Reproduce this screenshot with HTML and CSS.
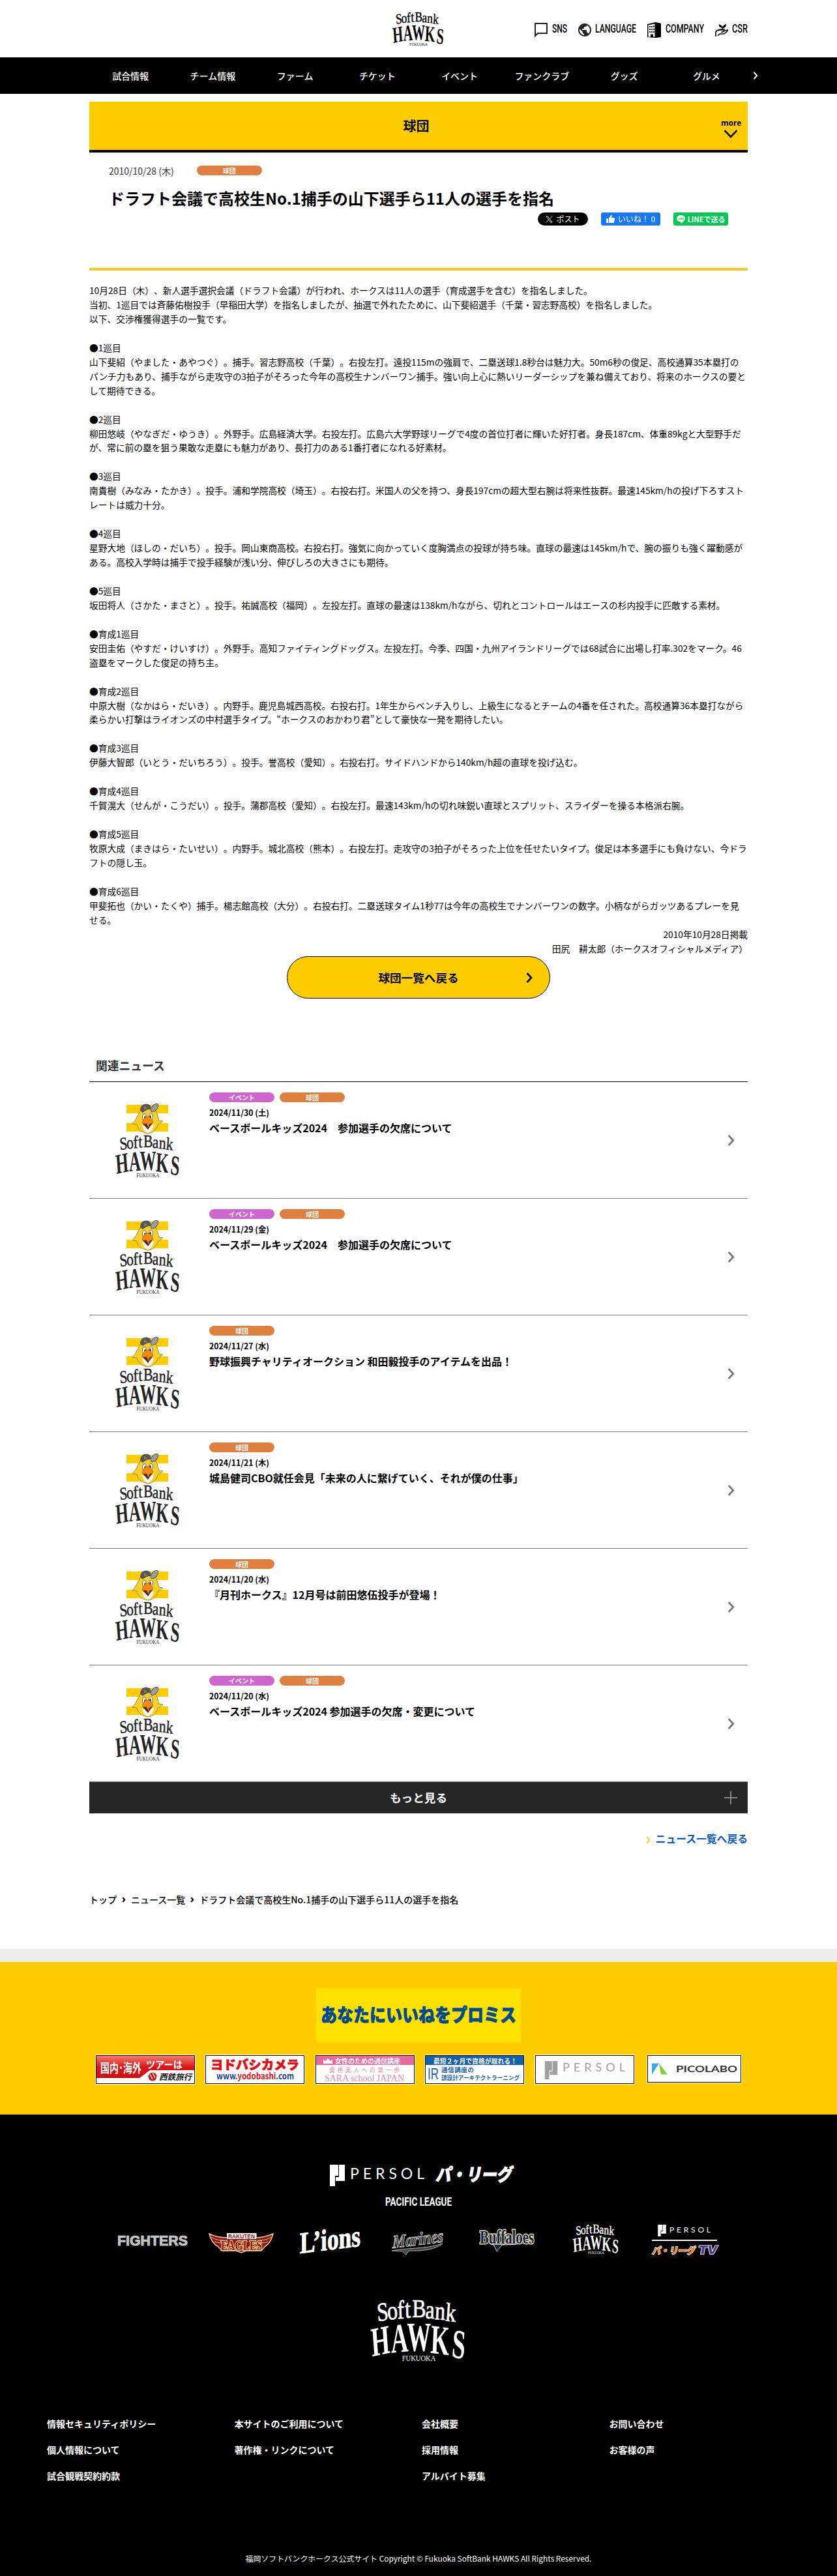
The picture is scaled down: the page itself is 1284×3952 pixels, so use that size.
FILE: index.html
```html
<!DOCTYPE html>
<html lang="ja">
<head>
<meta charset="utf-8">
<title>ドラフト会議で高校生No.1捕手の山下選手ら11人の選手を指名</title>
<link rel="stylesheet" href="styles.css">
</head>
<body>
<svg class="defs" width="0" height="0" aria-hidden="true">
  <symbol id="hawks" viewBox="0 0 102 65">
    <g fill="currentColor" font-family="Liberation Serif, serif" text-anchor="middle">
      <text transform="scale(.8 1)" font-size="27" stroke="currentColor" stroke-width=".5" x="17.5 30 40.5 49.5 64 78 91 104.5" y="23 21.5 20.5 19.5 19 20 21 22.5" rotate="-5 -4 -2 -1 0 2 3 5">SoftBank</text>
      <text transform="scale(.58 1)" font-size="43" font-weight="bold" x="21 54 88 125 158" y="60 56 54 56 60" rotate="-7 -3 0 4 7">HAWKS</text>
      <text x="51" y="64.5" font-size="8" textLength="35" lengthAdjust="spacingAndGlyphs">FUKUOKA</text>
    </g>
  </symbol>
  <symbol id="thumb" viewBox="0 0 102 113">
    <path fill="#fc0" d="M18 2h64v13H18zM18 30h64v13H18z"/>
    <path fill="#f9cf2a" stroke="#8a7430" stroke-width=".8" d="M42 8C35 16 35 23 27 31l7 1c1 7 8 13 17 14 8-1 13-6 15-13l8-6-6-1c-3-8-2-13-9-19z"/>
    <path fill="#fff" d="M42 33c2 8 5 11 9 12 4-1 8-6 9-13l-9 4z"/>
    <ellipse cx="45.500" cy="21" rx="3" ry="5.500" fill="#fff" stroke="#333" stroke-width=".7"/>
    <ellipse cx="55.500" cy="20" rx="3" ry="5" fill="#fff" stroke="#333" stroke-width=".7"/>
    <ellipse cx="46.500" cy="22" rx="1.300" ry="3" fill="#222"/>
    <ellipse cx="54.500" cy="21" rx="1.300" ry="3" fill="#222"/>
    <path fill="#5a2a18" d="M43 31l8 9 7-10z"/>
    <path fill="#f08a12" stroke="#7a4a10" stroke-width=".5" d="M50.500 20c4 0 7 4 8.500 9l-6 3-1 5-3-6-7-1c1-5 4-10 8.500-10z"/>
    <path fill="#55565a" d="M39 11C39 3 45-1 51 1c4 1 5 4 4 8-5 0-9 2-12 5z"/>
    <ellipse cx="61" cy="6.500" rx="7.500" ry="4" transform="rotate(-50 61 6.500)" fill="#9b9ca0" stroke="#55565a"/>
    <path d="M46 4v5M46 7q3-2 3 2" fill="none" stroke="#c8a020"/>
    <use href="#hawks" y="48" width="102" height="65"/>
  </symbol>
  <symbol id="persol-mark" viewBox="0 0 23 33">
    <path fill="currentColor" d="M0 0h13v17h-5v16H0zM14 0h9v25H9v-6h5z"/>
  </symbol>
  <symbol id="chev" viewBox="0 0 10 16"><path d="M1.500 1l6.500 7-6.500 7" fill="none" stroke="currentColor" stroke-width="2.600"/></symbol>
  <symbol id="chev-bold" viewBox="0 0 10 16"><path d="M2 2l5 6-5 6" fill="none" stroke="currentColor" stroke-width="4"/></symbol>
</svg>

<header class="head">
  <svg class="head-logo" role="img" aria-label="SoftBank HAWKS"><use href="#hawks"/></svg>
  <ul class="util">
    <li><svg width="20" height="22" viewBox="0 0 20 22"><path d="M1 1h18v15H5l-4 4z" fill="none" stroke="#222" stroke-width="2"/></svg><svg class="cond" width="23" height="20"><text x="0" y="16" textLength="23" lengthAdjust="spacingAndGlyphs">SNS</text></svg></li>
    <li><svg width="20" height="20" viewBox="2 2 20 20"><path fill="#222" d="M12 2C6.480 2 2 6.480 2 12s4.480 10 10 10 10-4.480 10-10S17.520 2 12 2zm-1 17.930c-3.950-.49-7-3.850-7-7.930 0-.62.080-1.210.210-1.790L9 15v1c0 1.100.9 2 2 2v1.930zm6.900-2.540c-.26-.81-1-1.390-1.900-1.390h-1v-3c0-.55-.45-1-1-1H8v-2h2c.55 0 1-.45 1-1V7h2c1.100 0 2-.9 2-2v-.41c2.930 1.190 5 4.060 5 7.410 0 2.080-.8 3.970-2.100 5.390z"/></svg><svg class="cond" width="63" height="20"><text x="0" y="16" textLength="63" lengthAdjust="spacingAndGlyphs">LANGUAGE</text></svg></li>
    <li><svg width="21" height="24" viewBox="0 0 21 24"><path d="M0 3l13-3 8 2v21l-8 1-13-1z"/><path fill="#fff" d="M1.500 4.500l10-2v20H9v-4H5v4H1.500z"/><path d="M3 6h2v2H3zM6 6h2v2H6zM9 5.500h2v2H9zM3 10h2v2H3zM6 10h2v2H6zM9 10h2v2H9zM3 14h2v2H3zM6 14h2v2H6zM9 14h2v2H9z"/></svg><svg class="cond" width="59" height="20"><text x="0" y="16" textLength="59" lengthAdjust="spacingAndGlyphs">COMPANY</text></svg></li>
    <li><svg width="20" height="21" viewBox="0 0 20 21"><path d="M11 7C11 4 9 2 6 1c-1 3 1 5 5 6zM11.500 7C12 3 14 2 17 1c0 4-2 6-5.500 6z"/><path d="M11.300 4v5M1 20v-7c2-3 5-4 8-3h4c1 2 0 3-4 3.500M13 12l6-2c1 1-3 5-6 6H7l-3 3M5 11l3-2h7" fill="none" stroke="#111" stroke-width="1.700"/></svg><svg class="cond" width="24" height="20"><text x="0" y="16" textLength="24" lengthAdjust="spacingAndGlyphs">CSR</text></svg></li>
  </ul>
</header>

<nav class="gnav">
  <ul class="wrap">
    <li>試合情報</li><li>チーム情報</li><li>ファーム</li><li>チケット</li><li>イベント</li><li>ファンクラブ</li><li>グッズ</li><li>グルメ</li>
    <svg class="gnav-next"><use href="#chev"/></svg>
  </ul>
</nav>

<main class="wrap">
  <div class="cat">
    <h1>球団</h1>
    <div class="cat-more">more<svg width="22" height="14" viewBox="0 0 22 14"><path d="M1.500 2l9.500 10 9.500-10" fill="none" stroke="#111" stroke-width="2.600"/></svg></div>
  </div>

  <div class="art-head">
    <div class="meta"><time>2010/10/28 (木)</time><span class="tag club">球団</span></div>
    <h2>ドラフト会議で高校生No.1捕手の山下選手ら11人の選手を指名</h2>
    <div class="share">
      <span class="sb x"><svg width="11" height="11" viewBox="0 0 24 24"><path fill="none" stroke="#fff" stroke-width="1.800" d="M2 2h5l15 20h-5zM22 1L13.500 10.500M10.500 13.500L2 23"/></svg>ポスト</span>
      <span class="sb fb"><svg width="13" height="12" viewBox="0 0 13 12"><path fill="#fff" d="M0 5h3v7H0zM4 5l3-5c2 0 2 1 1 4h4c1 0 1 1 1 2l-1 5c0 1-1 1-2 1H4z"/></svg>いいね！ 0</span>
      <span class="sb line"><svg width="13" height="13" viewBox="0 0 13 13"><path fill="#fff" d="M6.500 0C10 0 13 2.300 13 5.300c0 3-4 6-6.500 7.700V10.500C3 10.500 0 8.300 0 5.300S3 0 6.500 0z"/><text x="6.500" y="6.800" text-anchor="middle" font-size="4" font-weight="bold" fill="#06c755" font-family="Liberation Sans">LINE</text></svg>LINEで送る</span>
    </div>
  </div>

  <article class="body">
    <p>10月28日（木）、新人選手選択会議（ドラフト会議）が行われ、ホークスは11人の選手（育成選手を含む）を指名しました。<br>当初、1巡目では斉藤佑樹投手（早稲田大学）を指名しましたが、抽選で外れたために、山下斐紹選手（千葉・習志野高校）を指名しました。<br>以下、交渉権獲得選手の一覧です。</p>
    <p>●1巡目<br>山下斐紹（やました・あやつぐ）。捕手。習志野高校（千葉）。右投左打。遠投115mの強肩で、二塁送球1.8秒台は魅力大。50m6秒の俊足、高校通算35本塁打のパンチ力もあり、捕手ながら走攻守の3拍子がそろった今年の高校生ナンバーワン捕手。強い向上心に熱いリーダーシップを兼ね備えており、将来のホークスの要として期待できる。</p>
    <p>●2巡目<br>柳田悠岐（やなぎだ・ゆうき）。外野手。広島経済大学。右投左打。広島六大学野球リーグで4度の首位打者に輝いた好打者。身長187cm、体重89kgと大型野手だが、常に前の塁を狙う果敢な走塁にも魅力があり、長打力のある1番打者になれる好素材。</p>
    <p>●3巡目<br>南貴樹（みなみ・たかき）。投手。浦和学院高校（埼玉）。右投右打。米国人の父を持つ、身長197cmの超大型右腕は将来性抜群。最速145km/hの投げ下ろすストレートは威力十分。</p>
    <p>●4巡目<br>星野大地（ほしの・だいち）。投手。岡山東商高校。右投右打。強気に向かっていく度胸満点の投球が持ち味。直球の最速は145km/hで、腕の振りも強く躍動感がある。高校入学時は捕手で投手経験が浅い分、伸びしろの大きさにも期待。</p>
    <p>●5巡目<br>坂田将人（さかた・まさと）。投手。祐誠高校（福岡）。左投左打。直球の最速は138km/hながら、切れとコントロールはエースの杉内投手に匹敵する素材。</p>
    <p>●育成1巡目<br>安田圭佑（やすだ・けいすけ）。外野手。高知ファイティングドッグス。左投左打。今季、四国・九州アイランドリーグでは68試合に出場し打率.302をマーク。46盗塁をマークした俊足の持ち主。</p>
    <p>●育成2巡目<br>中原大樹（なかはら・だいき）。内野手。鹿児島城西高校。右投右打。1年生からベンチ入りし、上級生になるとチームの4番を任された。高校通算36本塁打ながら柔らかい打撃はライオンズの中村選手タイプ。“ホークスのおかわり君”として豪快な一発を期待したい。</p>
    <p>●育成3巡目<br>伊藤大智郎（いとう・だいちろう）。投手。誉高校（愛知）。右投右打。サイドハンドから140km/h超の直球を投げ込む。</p>
    <p>●育成4巡目<br>千賀滉大（せんが・こうだい）。投手。蒲郡高校（愛知）。右投左打。最速143km/hの切れ味鋭い直球とスプリット、スライダーを操る本格派右腕。</p>
    <p>●育成5巡目<br>牧原大成（まきはら・たいせい）。内野手。城北高校（熊本）。右投左打。走攻守の3拍子がそろった上位を任せたいタイプ。俊足は本多選手にも負けない、今ドラフトの隠し玉。</p>
    <p>●育成6巡目<br>甲斐拓也（かい・たくや）捕手。楊志館高校（大分）。右投右打。二塁送球タイム1秒77は今年の高校生でナンバーワンの数字。小柄ながらガッツあるプレーを見せる。</p>
    <p class="sign">2010年10月28日掲載<br>田尻　耕太郎（ホークスオフィシャルメディア）</p>
  </article>

  <a class="back">球団一覧へ戻る<svg><use href="#chev"/></svg></a>

  <section class="news">
    <h3>関連ニュース</h3>
    <div class="item"><svg class="thumb"><use href="#thumb"/></svg><div class="txt"><div class="tags"><span class="tag event">イベント</span><span class="tag club">球団</span></div><time>2024/11/30 (土)</time><p>ベースボールキッズ2024　参加選手の欠席について</p></div><svg class="go"><use href="#chev"/></svg></div>
    <div class="item"><svg class="thumb"><use href="#thumb"/></svg><div class="txt"><div class="tags"><span class="tag event">イベント</span><span class="tag club">球団</span></div><time>2024/11/29 (金)</time><p>ベースボールキッズ2024　参加選手の欠席について</p></div><svg class="go"><use href="#chev"/></svg></div>
    <div class="item"><svg class="thumb"><use href="#thumb"/></svg><div class="txt"><div class="tags"><span class="tag club">球団</span></div><time>2024/11/27 (水)</time><p>野球振興チャリティオークション 和田毅投手のアイテムを出品！</p></div><svg class="go"><use href="#chev"/></svg></div>
    <div class="item"><svg class="thumb"><use href="#thumb"/></svg><div class="txt"><div class="tags"><span class="tag club">球団</span></div><time>2024/11/21 (木)</time><p>城島健司CBO就任会見「未来の人に繋げていく、それが僕の仕事」</p></div><svg class="go"><use href="#chev"/></svg></div>
    <div class="item"><svg class="thumb"><use href="#thumb"/></svg><div class="txt"><div class="tags"><span class="tag club">球団</span></div><time>2024/11/20 (水)</time><p>『月刊ホークス』12月号は前田悠伍投手が登場！</p></div><svg class="go"><use href="#chev"/></svg></div>
    <div class="item"><svg class="thumb"><use href="#thumb"/></svg><div class="txt"><div class="tags"><span class="tag event">イベント</span><span class="tag club">球団</span></div><time>2024/11/20 (水)</time><p>ベースボールキッズ2024 参加選手の欠席・変更について</p></div><svg class="go"><use href="#chev"/></svg></div>
    <div class="load">もっと見る<svg width="20" height="20" viewBox="0 0 20 20"><path d="M0 10h20M10 0v20" stroke="#888" stroke-width="2"/></svg></div>
    <a class="list-link"><svg><use href="#chev"/></svg>ニュース一覧へ戻る</a>
  </section>

  <nav class="crumb"><span>トップ</span><svg><use href="#chev-bold"/></svg><span>ニュース一覧</span><svg><use href="#chev-bold"/></svg><span>ドラフト会議で高校生No.1捕手の山下選手ら11人の選手を指名</span></nav>
</main>

<section class="sponsors">
  <svg class="promise" viewBox="0 0 314 84"><text x="7" y="52" textLength="300" lengthAdjust="spacingAndGlyphs" font-size="28" font-weight="900" fill="#004b8f" stroke="#004b8f" stroke-width=".8">あなたにいいねをプロミス</text></svg>
  <div class="banners">
    <div class="bn"><svg viewBox="0 0 150 42">
      <defs><linearGradient id="rg" x2="0" y2="1"><stop offset="0" stop-color="#f87c70"/><stop offset=".5" stop-color="#d81818"/><stop offset="1" stop-color="#d01010"/></linearGradient></defs>
      <path fill="url(#rg)" d="M0 0h150v22H82L66 34H0z"/>
      <g fill="#fff" font-weight="bold"><text x="6" y="26" font-size="19" textLength="63" lengthAdjust="spacingAndGlyphs">国内･海外</text><text x="76" y="19" font-size="15" textLength="56" lengthAdjust="spacingAndGlyphs">ツアーは</text></g>
      <circle cx="86" cy="32" r="6.500" fill="#d01010"/><path d="M82 28l4 8M86 26l4 8" stroke="#fff" stroke-width="1.500"/>
      <text x="96" y="37" font-size="12.5" font-weight="bold" font-style="italic" fill="#111" textLength="50" lengthAdjust="spacingAndGlyphs">西鉄旅行</text></svg></div>
    <div class="bn"><svg viewBox="0 0 150 42"><text x="7" y="21" font-size="19" font-weight="900" fill="#e01018" stroke="#e01018" stroke-width=".7" textLength="136" lengthAdjust="spacingAndGlyphs">ヨドバシカメラ</text><text x="16" y="36" font-size="13" font-weight="bold" fill="#1c3f94" textLength="119" lengthAdjust="spacingAndGlyphs">www.<tspan fill="#e01018">yodobashi</tspan>.com</text></svg></div>
    <div class="bn"><svg viewBox="0 0 150 42"><path fill="#ea68a2" d="M0 0h150v14H0z"/><path fill="#fff" d="M11 5l3 3 4-4 4 4 3-3v7H11z"/><text x="29" y="11.500" font-size="10" font-weight="bold" fill="#fff" textLength="100" lengthAdjust="spacingAndGlyphs">女性のための通信講座</text><text x="20" y="24.500" font-size="9" fill="#e58ab0" textLength="108">資格美人への第一歩</text><text x="13" y="38.500" font-size="14" font-family="Liberation Serif" fill="#e58ab0" textLength="122" lengthAdjust="spacingAndGlyphs">SARA school JAPAN</text></svg></div>
    <div class="bn"><svg viewBox="0 0 150 42"><path fill="#1660ab" d="M0 0h150v14H0z"/><text x="12" y="11.500" font-size="9.800" font-weight="bold" fill="#fff" textLength="128" lengthAdjust="spacingAndGlyphs">最短２ヶ月で資格が取れる！</text><text x="3" y="36" font-size="24" fill="#1660ab" textLength="17" lengthAdjust="spacingAndGlyphs" font-family="Liberation Sans">IR</text><g fill="#1660ab" font-weight="bold"><text x="24" y="25" font-size="9.500" textLength="50">通信講座の</text><text x="24" y="37" font-size="8.600" textLength="120" lengthAdjust="spacingAndGlyphs">諒設計アーキテクトラーニング</text></g></svg></div>
    <div class="bn"><svg viewBox="0 0 150 42"><g color="#a0a0a0"><use href="#persol-mark" x="13" y="8" width="21" height="28"/></g><text x="41" y="24" font-size="18" font-family="Lato" fill="#a0a0a0" textLength="96">PERSOL</text></svg></div>
    <div class="bn small"><svg viewBox="0 0 142 39"><path fill="#3ba9e8" d="M6 28V11h11z"/><path fill="#7ad62e" d="M17 11l13 17H20z"/><text x="43" y="24" font-size="14" font-family="Lato" font-weight="bold" fill="#333" textLength="94" lengthAdjust="spacingAndGlyphs">PICOLABO</text></svg></div>
  </div>
</section>

<footer class="foot">
  <svg class="league" viewBox="0 0 284 36"><use href="#persol-mark" width="23" height="33"/><text x="31" y="21.500" font-size="23" font-family="Lato" fill="#fff" textLength="114" lengthAdjust="spacing">PERSOL</text><text transform="translate(162 25) skewX(-10)" font-size="27" font-weight="900" fill="#fff" stroke="#fff" textLength="117" lengthAdjust="spacingAndGlyphs">パ・リーグ</text></svg>
  <svg class="pl" width="102" height="20"><text x="0" y="17" textLength="102" lengthAdjust="spacingAndGlyphs">PACIFIC LEAGUE</text></svg>
  <div class="teams">
    <svg width="108" height="50" viewBox="0 0 108 50"><text x="0" y="33" font-size="22" font-family="Liberation Sans" font-weight="bold" fill="#bbb" stroke="#e8e8e8" stroke-width=".7" textLength="108" lengthAdjust="spacingAndGlyphs">FIGHTERS</text></svg>
    <svg width="98" height="50" viewBox="0 0 98 50"><path fill="#8c1515" stroke="#e8c890" stroke-width="1.500" d="M0 15c12 6 22 6 28 6V15h44v6c6 0 16-2 26-6-3 12-8 17-13 20l-5 6H57l-8 3-8-3H20l-6-6C8 32 3 27 0 15z"/><path fill="#fff" d="M27 14h45v9H27z"/><text x="29" y="22" font-size="9" font-family="Liberation Sans" font-weight="bold" fill="#8c1515" textLength="41" lengthAdjust="spacingAndGlyphs">RAKUTEN</text><path d="M3 20c6 4 12 5 18 5M8 27c5 2 9 2 13 2M95 20c-6 4-12 5-18 5M90 27c-5 2-9 2-13 2" stroke="#e8c890" fill="none"/><text x="18" y="40" font-size="20" font-family="Liberation Serif" font-weight="bold" fill="#8c1515" stroke="#f8d890" stroke-width="2.500" paint-order="stroke" textLength="63" lengthAdjust="spacingAndGlyphs">EAGLES</text></svg>
    <svg width="94" height="50" viewBox="0 0 94 50"><text transform="translate(0 45) skewY(-7)" font-size="46" font-family="Liberation Serif" font-weight="bold" fill="#fff" stroke="#fff" stroke-width="1" textLength="93" lengthAdjust="spacingAndGlyphs">L’ions</text></svg>
    <svg width="84" height="50" viewBox="0 0 84 50"><path d="M1 41c25-5 50-2 78-11-10 9-32 12-52 11l-4 6-5-5z" fill="#444" stroke="#aaa"/><text transform="translate(2 37) skewY(-7)" font-size="28" font-family="Liberation Serif" font-weight="bold" font-style="italic" fill="#333" stroke="#bbb" stroke-width="1.200" textLength="78" lengthAdjust="spacingAndGlyphs">Marines</text></svg>
    <svg width="84" height="50" viewBox="0 0 84 50"><path d="M18 31l58-5c-10 5-28 6-42 6l-8 10-4-9z" fill="#15204a" stroke="#d8d0a0"/><text x="0" y="30" font-size="29" font-family="Liberation Serif" font-weight="bold" fill="#15204a" stroke="#e8e0b0" stroke-width="3" paint-order="stroke" textLength="83" lengthAdjust="spacingAndGlyphs">Buffaloes</text></svg>
    <svg class="hawks-s" width="73" height="47"><use href="#hawks"/></svg>
    <svg width="100" height="50" viewBox="0 0 100 50"><use href="#persol-mark" x="9" y="1" width="13" height="18"/><text x="27" y="13" font-size="12" font-family="Lato" fill="#fff" textLength="63">PERSOL</text><path d="M0 25h100" stroke="#fff" stroke-width="2"/><g font-weight="900" transform="translate(0 46) skewX(-10)"><text font-size="14" fill="#f07818" stroke="#fff" stroke-width="1.500" paint-order="stroke" textLength="66" lengthAdjust="spacingAndGlyphs">パ・リーグ</text><text x="70" font-size="17" fill="#4a3a8c" stroke="#fff" stroke-width="1.500" paint-order="stroke" textLength="29" lengthAdjust="spacingAndGlyphs">TV</text></g></svg>
  </div>
  <svg class="foot-logo" role="img" aria-label="SoftBank HAWKS"><use href="#hawks"/></svg>
  <div class="links">
    <ul><li>情報セキュリティポリシー</li><li>個人情報について</li><li>試合観戦契約約款</li></ul>
    <ul><li>本サイトのご利用について</li><li>著作権・リンクについて</li></ul>
    <ul><li>会社概要</li><li>採用情報</li><li>アルバイト募集</li></ul>
    <ul><li>お問い合わせ</li><li>お客様の声</li></ul>
  </div>
  <small>福岡ソフトバンクホークス公式サイト Copyright © Fukuoka SoftBank HAWKS All Rights Reserved.</small>
</footer>
</body>
</html>
```
FILE: styles.css
```css
* { box-sizing: border-box; }
body { margin: 0; background: #fff; color: #000; font-family: "Noto Sans CJK JP", sans-serif; font-size: 14px; line-height: 20px; text-spacing-trim: space-all; }
h1, h2, h3, p, ul { margin: 0; padding: 0; }
ul { list-style: none; }
svg { display: block; flex: none; overflow: visible; }
.defs { position: absolute; }
.wrap { width: 1010px; margin: 0 auto; }

.head { width: 1010px; height: 88px; margin: 0 auto; padding-top: 18px; display: grid; grid-template-columns: 1fr 82px 1fr; align-items: start; }
.head-logo { grid-column: 2; width: 82px; height: 52px; }
.util { display: flex; justify-content: flex-end; gap: 17px; margin-top: 16px; }
.util li { display: flex; align-items: center; gap: 6.5px; height: 24px; }
.util .cond { margin-top: -4px; }
.cond text { font: 500 19px "Roboto", sans-serif; }

.gnav { background: #000; color: #fff; height: 56px; }
.gnav ul { position: relative; display: flex; height: 56px; align-items: center; }
.gnav li { flex: 1; text-align: center; font-weight: 500; }
.gnav-next { position: absolute; left: 1018px; top: 22px; width: 8px; height: 12px; }

.cat { height: 78px; margin-top: 12px; background: #fc0; border-bottom: 4px solid #000; display: grid; grid-template-columns: 1fr 47px; align-items: center; }
.cat h1 { font-size: 20px; line-height: 30px; text-align: center; padding-left: 40px; }
.cat-more { padding-top: 7px; font-size: 12px; font-weight: 700; line-height: 14px; display: grid; gap: 3px; padding-left: 6px; width: 40px; }
.cat-more svg { margin-left: 4px; }

.art-head { height: 181px; border-bottom: 4px solid #f5ca1c; padding: 17px 30px 0; }
.meta { display: flex; align-items: center; gap: 35px; height: 21px; color: #333; }
.tag { width: 100px; height: 15px; border-radius: 8px; color: #fff; font-size: 10px; line-height: 15px; font-weight: 700; text-align: center; }
.club { background: #df8040; }
.event { background: #cf66cf; }
.art-head h2 { font-size: 24px; line-height: 36px; margin-top: 14px; }
.share { display: flex; justify-content: flex-end; margin-top: 4px; gap: 20px; }
.sb { height: 20px; display: flex; align-items: center; justify-content: center; gap: 5px; color: #fff; font-size: 12px; border-radius: 3px; white-space: nowrap; }
.sb.x { width: 77px; background: #000; border-radius: 10px; }
.sb.fb { width: 91px; background: #1877f2; }
.sb.line { width: 84px; background: #06c755; font-size: 11px; font-weight: 700; gap: 4px; }

.body { padding-top: 20px; font-size: 13.72px; line-height: 21.95px; }
.body p { margin-bottom: 21.95px; }
.body .sign { margin: -21.95px 0 0; text-align: right; }

.back { position: relative; display: block; width: 404px; height: 65px; margin: 0 auto; border: 1px solid #000; border-radius: 33px; background: #fc0; font-size: 17.6px; line-height: 63px; font-weight: 700; text-align: center; }
.back svg { position: absolute; right: 26px; top: 24px; width: 10px; height: 16px; }

.news { margin-top: 83px; }
.news h3 { height: 45px; padding-left: 10px; font-size: 17.8px; line-height: 38px; font-weight: 700; color: #333; border-bottom: 1px solid #000; }
.item { height: 179.15px; border-bottom: 1px solid #777; display: flex; padding: 16px 20px 0 39px; }
.thumb { width: 102px; height: 113px; margin-top: 17px; color: #222; }
.txt { flex: 1; padding-left: 43px; }
.tags { display: flex; gap: 8px; }
.item time { display: block; font-size: 12.3px; font-weight: 700; line-height: 18px; margin-top: 7px; }
.item p { font-size: 16px; font-weight: 700; line-height: 24px; margin-top: 2px; }
.go { width: 11px; height: 17px; margin-top: 65px; color: #777; }
.load { position: relative; height: 48px; background: #262626; color: #fff; font-size: 17.6px; line-height: 47px; font-weight: 700; text-align: center; }
.load svg { position: absolute; right: 16px; top: 14px; }
.list-link { display: flex; justify-content: flex-end; align-items: center; gap: 8px; margin-top: 27px; margin-bottom: -1px; height: 24px; color: #0b57c8; font-size: 15.8px; font-weight: 700; }
.list-link svg { width: 7px; height: 12px; color: #fc0; margin-top: 3px; }
.crumb { display: flex; align-items: center; gap: 8px; height: 24px; margin-top: 70px; font-weight: 500; }
.crumb svg { width: 6px; height: 9px; }

.sponsors { margin-top: 64px; border-top: 20px solid #eee; background: #fc0; height: 254px; padding-top: 40px; }
.promise { width: 314px; height: 84px; margin: 0 auto; background: #ffe100; }
.banners { width: 992px; margin: 18px auto 0; display: flex; justify-content: space-between; align-items: flex-start; }
.bn { width: 154px; height: 46px; padding: 1px; background: #fffbd8; }
.bn svg { width: 152px; height: 44px; border: 1px solid #000; background: #fff; overflow: hidden; }
.bn.small { width: 146px; height: 44px; margin-left: 4px; }
.bn.small svg { width: 144px; height: 42px; }

.foot { background: #000; color: #fff; height: 708px; padding-top: 77px; }
.league { width: 284px; height: 36px; margin: 0 auto 0 506px; }
.pl { margin: 10px auto 0; fill: #fff; }
.pl text { font: bold 19px "Roboto", sans-serif; }
.teams { display: grid; grid-template-columns: 141px 139px 140px 136px 142px 122px 100px; margin: 25px 0 0 180px; }
.foot-logo { width: 151px; height: 96px; margin: 65px auto 0; }
.links { display: grid; grid-template-columns: repeat(4, 287.5px); padding-left: 72px; margin-top: 75px; height: 120px; font-weight: 700; }
.links li { height: 40px; line-height: 40px; }
.foot small { display: block; margin-top: 97px; text-align: center; font-size: 11.9px; line-height: 20px; }
```
